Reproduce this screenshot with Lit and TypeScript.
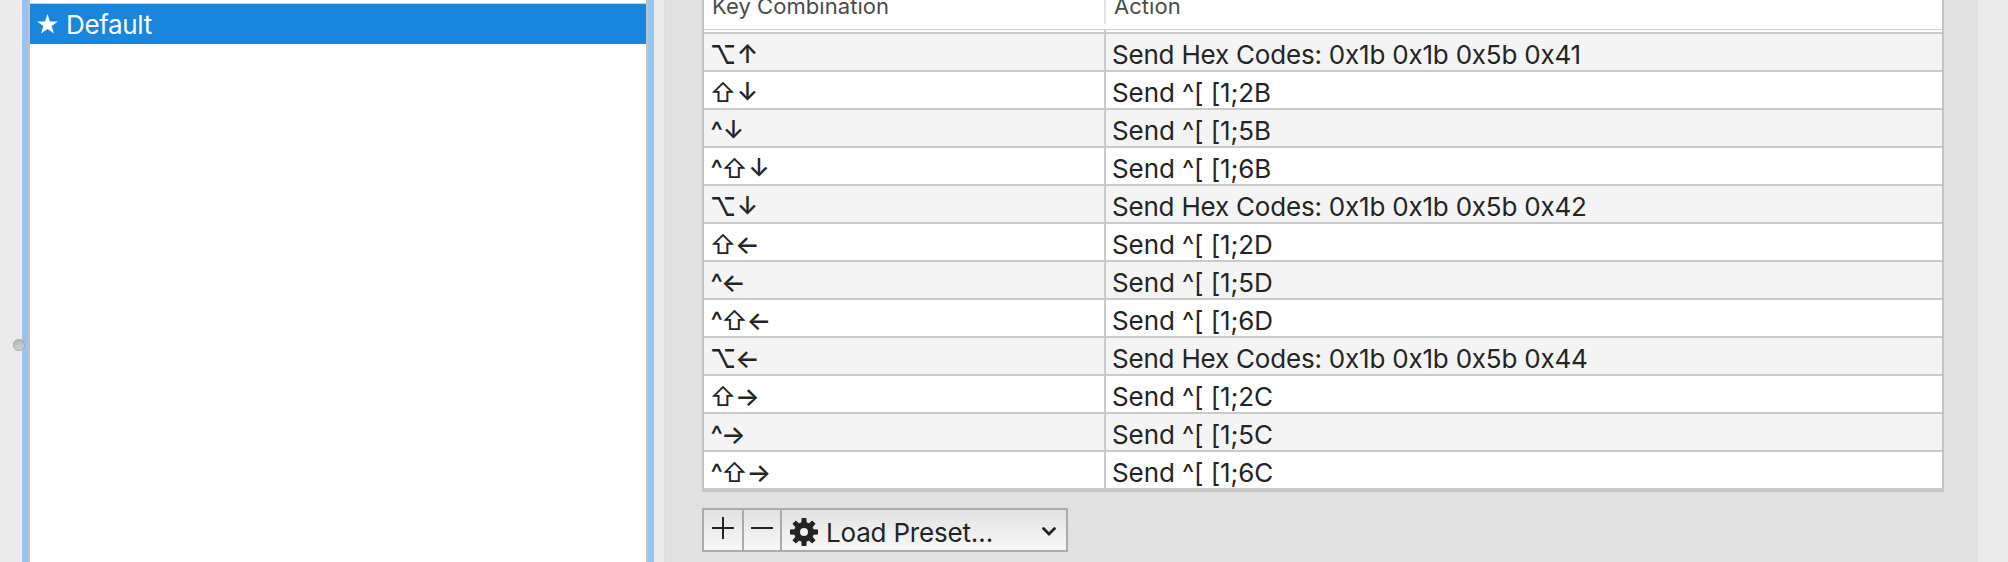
import { LitElement, html, css } from "lit";
import { customElement } from "lit/decorators.js";
import { classMap } from "lit/directives/class-map.js";

interface Binding { keys: string; action: string; hex?: boolean }

const BINDINGS: Binding[] = [
  { keys: "⌥↑", action: "Send Hex Codes: 0x1b 0x1b 0x5b 0x41", hex: true },
  { keys: "⇧↓", action: "Send ^[ [1;2B" },
  { keys: "^↓", action: "Send ^[ [1;5B" },
  { keys: "^⇧↓", action: "Send ^[ [1;6B" },
  { keys: "⌥↓", action: "Send Hex Codes: 0x1b 0x1b 0x5b 0x42", hex: true },
  { keys: "⇧←", action: "Send ^[ [1;2D" },
  { keys: "^←", action: "Send ^[ [1;5D" },
  { keys: "^⇧←", action: "Send ^[ [1;6D" },
  { keys: "⌥←", action: "Send Hex Codes: 0x1b 0x1b 0x5b 0x44", hex: true },
  { keys: "⇧→", action: "Send ^[ [1;2C" },
  { keys: "^→", action: "Send ^[ [1;5C" },
  { keys: "^⇧→", action: "Send ^[ [1;6C" },
];

const KIND: Record<string, string> = {
  "⌥": "option", "⇧": "shift", "^": "control",
  "↑": "arrow vertical", "↓": "arrow vertical", "←": "arrow", "→": "arrow",
};

@customElement("profile-list")
class ProfileList extends LitElement {
  static styles = css`
    :host { display: block; box-sizing: border-box; width: 632px; height: 562px;
      border: solid #96c3f1; border-width: 0 6px; }
    .list { box-sizing: border-box; height: 100%; background: #fff; border: solid #c3c3c3;
      border-width: 0 2px; padding-top: 3px; }
    .item { box-sizing: border-box; height: 41px; border-top: 1px solid #cfcfcf; background: #1a85dc;
      color: #fff; display: flex; align-items: center; padding-left: 7px; gap: 8px; }
    .star { width: 21px; height: 20px; }
    .name { font-size: 26px; line-height: 40px; letter-spacing: -0.35px; padding-top: 2px; }
  `;
  render() {
    return html`<div class="list"><div class="item">
      <svg class="star" viewBox="0 0 21 20"><path fill="#fff" d="M10.5 0 L13 7.5 H21 L14.6 12 L17 19.5 L10.5 15 L4 19.5 L6.4 12 L0 7.5 H8 Z"/></svg>
      <span class="name">Default</span></div></div>`;
  }
}

@customElement("key-table")
class KeyTable extends LitElement {
  static styles = css`
    :host { display: block; box-sizing: border-box; width: 1242px; height: 492px; overflow: hidden;
      background: #fff; border: 2px solid #c4c4c4; border-top: 0; }
    .head { display: grid; grid-template-columns: 402px 1fr; box-sizing: border-box; height: 30px;
      border-bottom: 1px solid #d0d0d0; color: #4b4b4b; font-size: 22px; line-height: 28px; }
    .th { height: 24px; box-sizing: border-box; padding-left: 8px; }
    .th span { display: block; margin-top: -8px; letter-spacing: 0.06px; }
    .th.first { border-right: 2px solid #e3e3e3; }
    .row { display: grid; grid-template-columns: 402px 1fr; height: 36px; border-bottom: 2px solid #cacaca; }
    .row:nth-child(even) { background: #f4f4f4; }
    .row.clipped { height: 2px; overflow: hidden; }
    .cell { font-size: 26px; line-height: 41px; height: 36px; color: #242424; white-space: pre; padding-left: 6px; }
    .keys { border-right: 2px solid #cacaca; display: flex; padding-left: 7px; font-weight: 500; }
    .key { display: flex; justify-content: center; width: 24px; }
    .shift { font-weight: 400; }
    .control { width: 11.5px; }
    .arrow { width: 25px; }
    .vertical { font-size: 25px; }
    .control + .arrow { margin-left: -1.5px; }
    .action { letter-spacing: -0.1px; }
    .action.hex { letter-spacing: -0.2px; }
  `;
  render() {
    return html`
      <div class="head"><div class="th first"><span>Key Combination</span></div><div class="th"><span>Action</span></div></div>
      <div class="body">
        <div class="row clipped"><div class="cell keys"></div><div class="cell action"></div></div>
        ${BINDINGS.map((b) => html`<div class="row">
          <div class="cell keys">${[...b.keys].map((k) => html`<span class="key ${KIND[k]}">${k}</span>`)}</div>
          <div class=${classMap({ cell: true, action: true, hex: !!b.hex })}>${b.action}</div></div>`)}
      </div>`;
  }
}

@customElement("preset-bar")
class PresetBar extends LitElement {
  static styles = css`
    :host { display: flex; box-sizing: border-box; width: 366px; height: 44px; border: 2px solid #ababab;
      background: linear-gradient(#e2e2e2, #f8f8f8); color: #242424; }
    .btn { display: flex; justify-content: center; border-right: 2px solid #ababab; }
    .plus { width: 38px; }
    .minus { width: 36px; }
    .glyph { width: 22px; height: 22px; margin-top: 7px; }
    .menu { flex: 1; display: flex; }
    .gear { width: 28px; height: 28px; margin: 8px 0 0 8px; }
    .label { flex: 1; font-size: 26px; line-height: 45px; height: 40px; padding-left: 8px; letter-spacing: -0.2px; }
    .chev { width: 14px; height: 9px; margin: 17px 10px 0 0; }
  `;
  render() {
    const teeth = [0, 45, 90, 135, 180, 225, 270, 315];
    return html`
      <div class="btn plus"><svg class="glyph" viewBox="0 0 22 22"><path d="M0 11H22M11 0V22" stroke="#242424" stroke-width="2"/></svg></div>
      <div class="btn minus"><svg class="glyph" viewBox="0 0 22 22"><path d="M0 11H22" stroke="#242424" stroke-width="2"/></svg></div>
      <div class="menu">
        <svg class="gear" viewBox="-14 -14 28 28">
          <circle r="7" fill="none" stroke="#242424" stroke-width="6"/>
          <path fill="#242424" d=${teeth.map((a) => {
            const t = (a * Math.PI) / 180, c = Math.cos(t), s = Math.sin(t);
            const p = (x: number, y: number) => `${(x * c - y * s).toFixed(2)} ${(x * s + y * c).toFixed(2)}`;
            return `M${p(-2.7, -9)}L${p(-2.4, -14)}L${p(2.4, -14)}L${p(2.7, -9)}Z`;
          }).join("")}/>
        </svg>
        <span class="label">Load Preset…</span>
        <svg class="chev" viewBox="0 0 14 9"><path d="M1.5 1.5L7 7L12.5 1.5" fill="none" stroke="#242424" stroke-width="2.8" stroke-linecap="round"/></svg>
      </div>`;
  }
}

@customElement("app-root")
class AppRoot extends LitElement {
  static styles = css`
    :host { display: block; width: 2008px; height: 562px; overflow: hidden; background: #ebebeb;
      font-family: Inter, "Liberation Sans", sans-serif; position: relative; }
    .layout { display: flex; padding-left: 22px; gap: 10px; }
    .panel { box-sizing: border-box; width: 1314px; height: 562px; background: #e1e1e1; border: solid #dcdcdc;
      border-width: 0 1px; padding-left: 37px; display: flex; flex-direction: column; gap: 16px; }
    .knob { position: absolute; left: 13px; top: 339px; width: 12px; height: 12px; box-sizing: border-box;
      border-radius: 50%; border: 1px solid #a5a5a5; background: linear-gradient(#b5b5b5, #d2d2d2); }
  `;
  render() {
    return html`<div class="layout"><profile-list></profile-list>
      <div class="panel"><key-table></key-table><preset-bar></preset-bar></div></div>
      <div class="knob"></div>`;
  }
}
